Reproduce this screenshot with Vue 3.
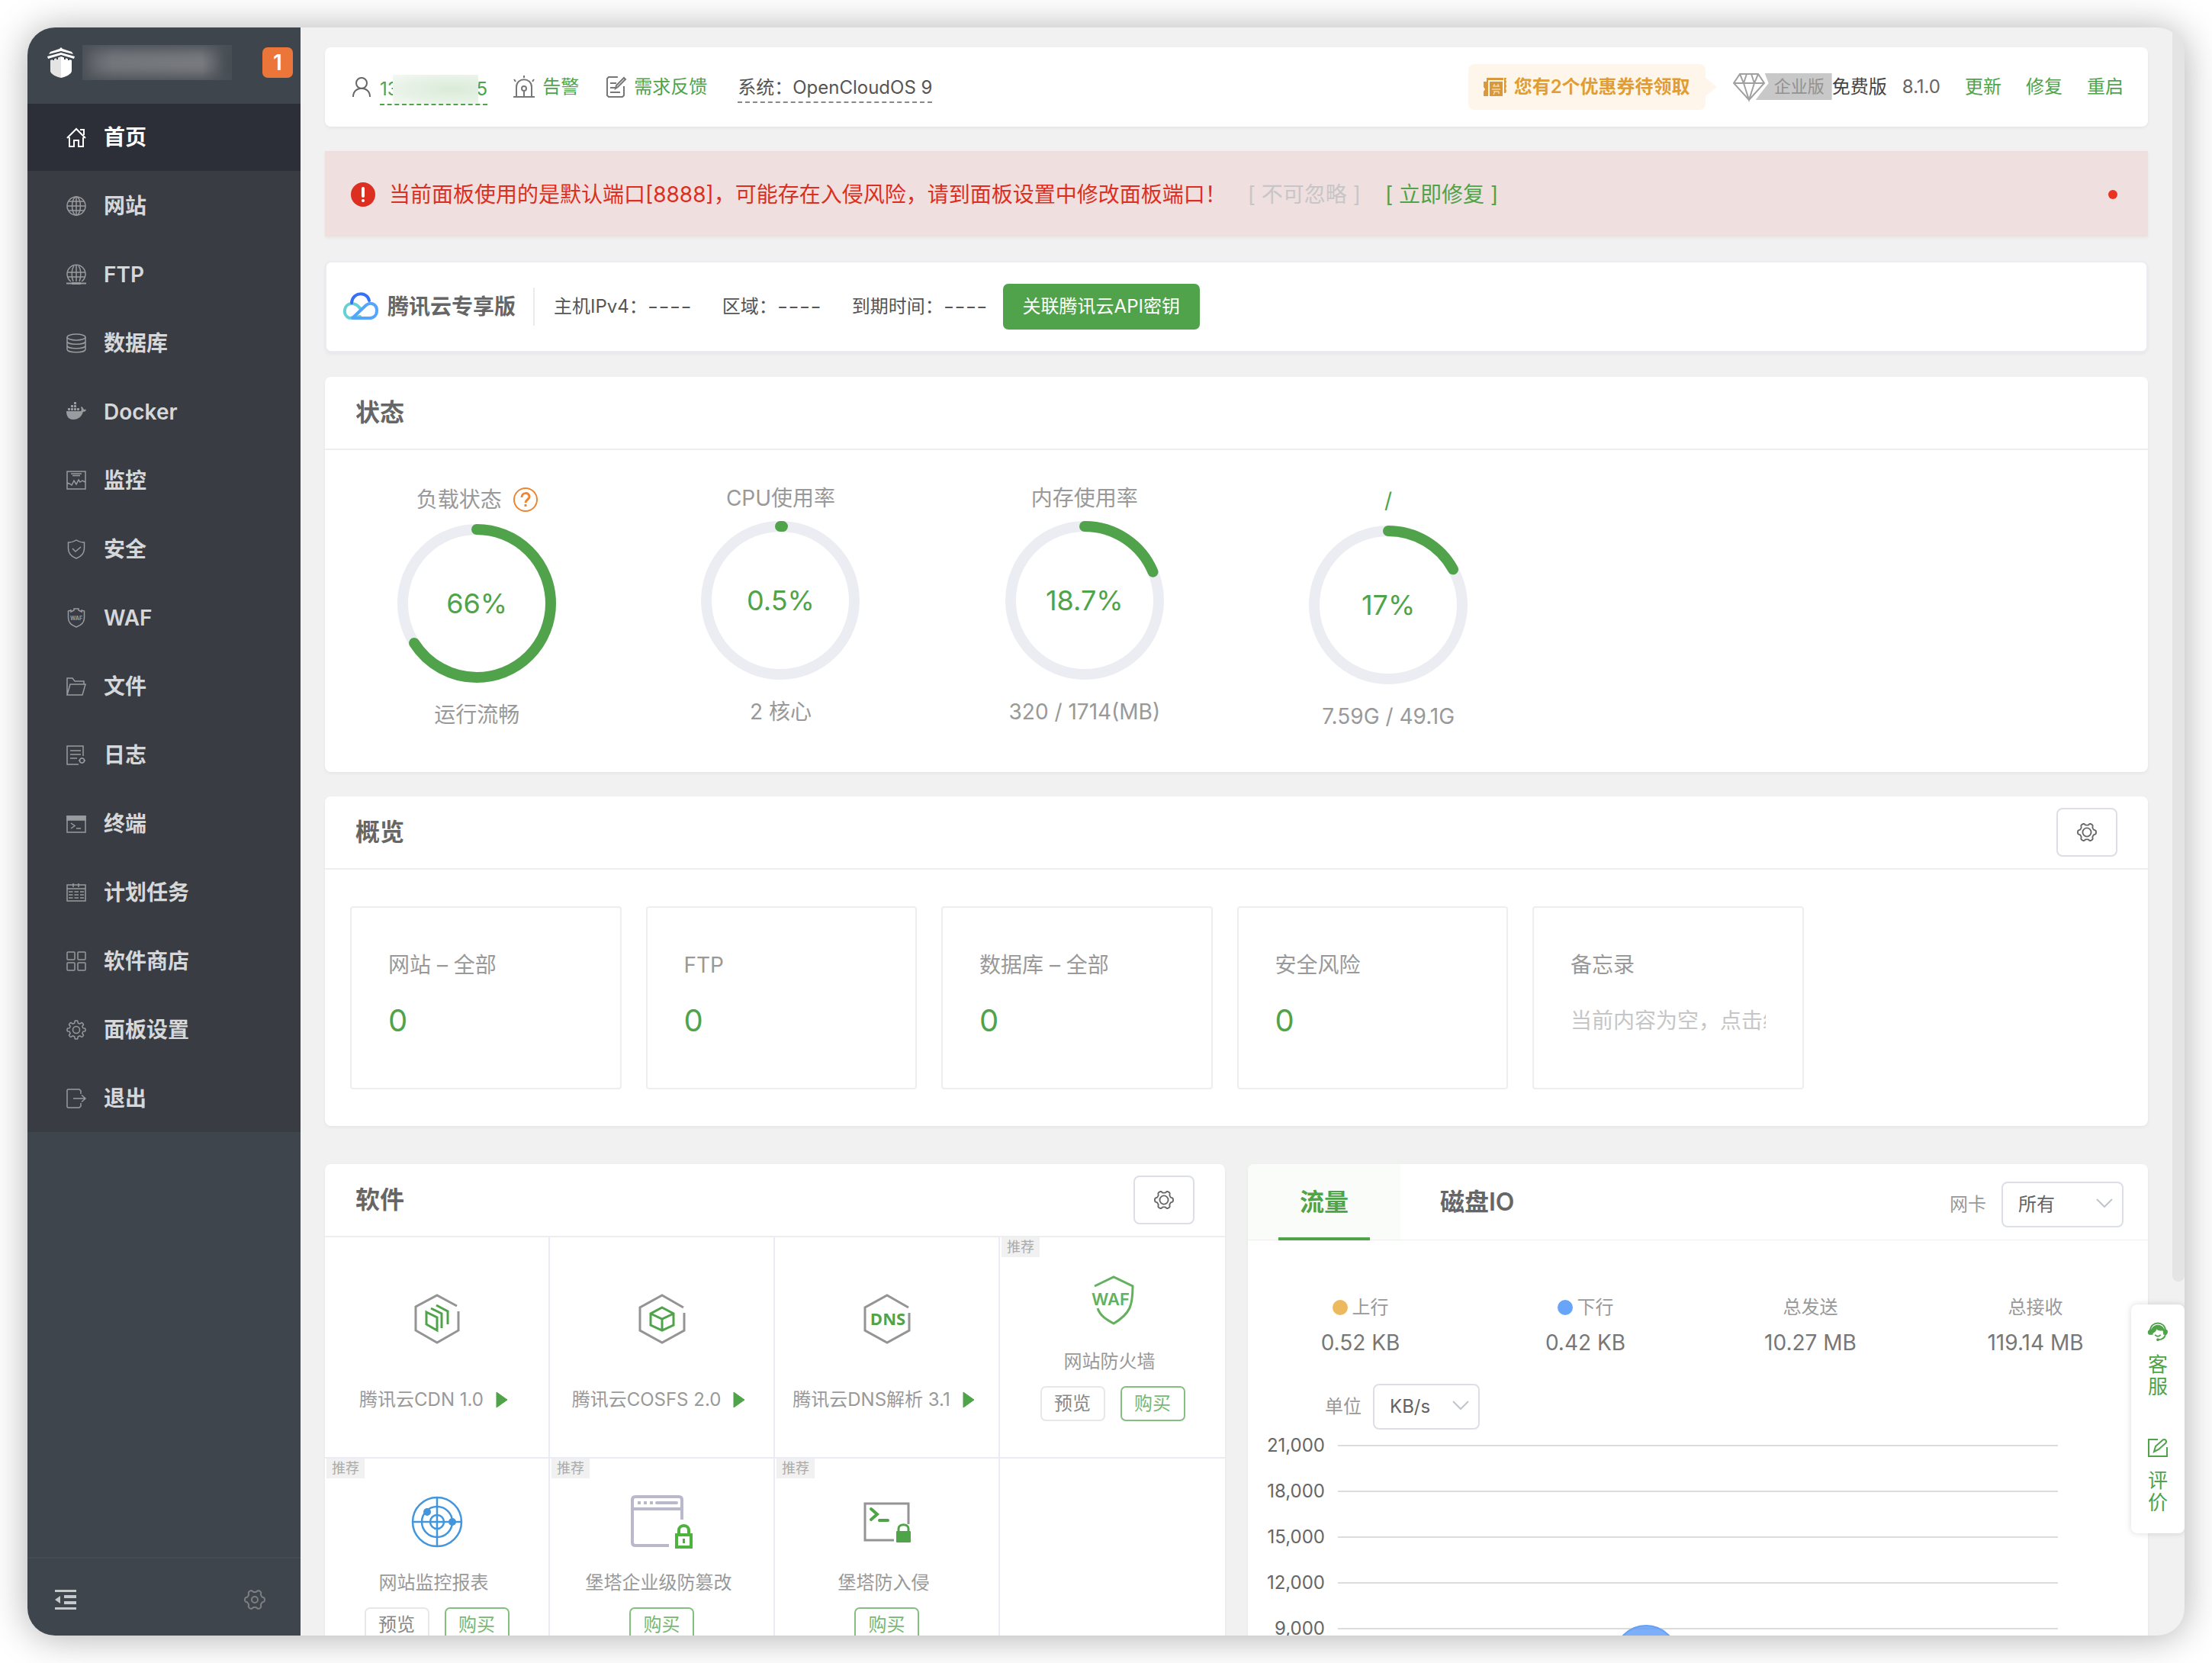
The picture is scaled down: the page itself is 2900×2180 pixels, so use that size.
<script setup>
import { ref } from 'vue'

// Outline of a toothed wheel, centred in a box of the given size
function gearPath(size, teeth, outer, depth, sharp) {
  const points = []
  for (let i = 0; i < 144; i++) {
    const a = (i / 144) * Math.PI * 2
    const r = outer - depth / 2 + (depth / 2) * Math.tanh(sharp * Math.cos(teeth * a))
    points.push(`${(size / 2 + r * Math.cos(a)).toFixed(2)} ${(size / 2 + r * Math.sin(a)).toFixed(2)}`)
  }
  return `M${points.join('L')}Z`
}

const gear6 = gearPath(28, 6, 13, 3, 2)
const gear8 = gearPath(26, 8, 12, 3, 3)

const menuIcons = {
  home: '<path d="M1 14 13 2l12 12M18 3h5v7M4 13v12h6v-8h6v8h6V13"/>',
  globe: '<circle cx="13" cy="13" r="12"/><ellipse cx="13" cy="13" rx="5.500" ry="12"/><path d="M13 1v24M1 13h24M3 7h20M3 19h20"/>',
  ftp: '<path d="M6 22A12 12 0 1 1 20 22M9 22C6 15 7 5 10 2M17 22c3-7 2-17-1-20M13 1v21M1 10h24M2 16h22"/><path d="M0 24.500h26" stroke-width="2"/><path d="M7 24.500h12" stroke-width="3"/>',
  database: '<ellipse cx="13" cy="5" rx="12" ry="4"/><path d="M1 5v16c0 5 24 5 24 0V5M1 10.500c0 5 24 5 24 0M1 16c0 5 24 5 24 0"/>',
  docker: '<g fill="currentColor" stroke="none"><path d="M0 12h19c1-1 1-3 0-5l1-1c2 1 2 3 3 4 1-.4 2-.4 3 .2-.8 1.800-2 2.600-4 2.600C20 19 16 23 9 23c-6 0-9-4-9-11z"/><path d="M2 8h3v3H2zM6 8h3v3H6zM10 8h3v3h-3zM14 8h3v3h-3zM6 4h3v3H6zM10 4h3v3h-3zM10 0h3v3h-3z"/></g>',
  monitor: '<path d="M1 1h24v23H1zM6 4h14M8 6.500h10M1 16l3 1 3 2 3-6 3 5 3-6 2 3 3-2 4 2"/>',
  shield: '<path d="M13 1c3 2 7 3 10.500 3v8c0 7-5 11-10.500 13C7.500 23 2.500 19 2.500 12V4C6 4 10 3 13 1z"/><path d="m8 12 4 4 7-6"/>',
  waf: '<path d="M2.500 4 6 3v2l4-2V1h6v2l4 2V3l3.500 1v9c0 6-5 10-10.500 12C7.500 23 2.500 19 2.500 13z"/><text x="13" y="15.500" text-anchor="middle" font-size="7" font-weight="700" font-family="Inter, sans-serif" fill="currentColor" stroke="none">WAF</text>',
  folder: '<path d="M1 24V2h7l3 4h12v4M1 24l4-14h20l-4 14z"/>',
  log: '<path d="M16 25H1V1h21v13M5 7h14M5 12h14M5 17h9"/><circle cx="20.500" cy="20" r="3"/><path d="M16 20h1M24 20h1M20.500 16v1M20.500 23v1"/>',
  terminal: '<path d="M1 3h24v21H1z"/><path d="M1 3h24v5H1z" fill="currentColor"/><path d="m6 12 5 3.500-5 3.500M13 19h6"/>',
  calendar: '<path d="M1 3h24v21H1zM1 8h24M9 1v5M16 1v5"/><path d="M3 12h20M3 16h20M3 20h20" stroke-dasharray="5.500 2"/>',
  grid: '<rect x="1" y="1" width="10" height="10" rx="1"/><rect x="15" y="1" width="10" height="10" rx="1"/><rect x="1" y="15" width="10" height="10" rx="1"/><rect x="15" y="15" width="10" height="10" rx="1"/>',
  gear: `<path d="${gear8}"/><circle cx="13" cy="13" r="4.500"/>`,
  exit: '<path d="M19 7V3l-2-2H2L1 2v22l1 1h15l2-2v-4M9 13h16M20 8.500l5 4.500-5 4.500"/>'
}

const menu = [
  { icon: 'home', label: '首页' },
  { icon: 'globe', label: '网站' },
  { icon: 'ftp', label: 'FTP' },
  { icon: 'database', label: '数据库' },
  { icon: 'docker', label: 'Docker' },
  { icon: 'monitor', label: '监控' },
  { icon: 'shield', label: '安全' },
  { icon: 'waf', label: 'WAF' },
  { icon: 'folder', label: '文件' },
  { icon: 'log', label: '日志' },
  { icon: 'terminal', label: '终端' },
  { icon: 'calendar', label: '计划任务' },
  { icon: 'grid', label: '软件商店' },
  { icon: 'gear', label: '面板设置' },
  { icon: 'exit', label: '退出' }
]

const cloudFields = ['主机IPv4：', '区域：', '到期时间：']

const gauges = [
  { kind: 'load', label: '负载状态', value: 66, note: '运行流畅', help: true },
  { kind: 'cpu', label: 'CPU使用率', value: 0.5, note: '2 核心' },
  { kind: 'memory', label: '内存使用率', value: 18.7, note: '320 / 1714(MB)' },
  { kind: 'disk', label: '/', value: 17, note: '7.59G / 49.1G' }
]

const counters = [
  { label: '网站 – 全部', value: 0 },
  { label: 'FTP', value: 0 },
  { label: '数据库 – 全部', value: 0 },
  { label: '安全风险', value: 0 }
]

const hexagon = '<path d="M64 21 36 5 7 21v30l29 16 29-16V28" stroke="#949494" stroke-width="3"/>'
const softIcons = {
  cdn: '<path d="M62 19 36 5 8 20v31l28 16 28-16V26" stroke="#949494" stroke-width="3"/><path d="m22 27 14 7v17l-14-8zM28 22l14 7v19M35 18l15 8v17" stroke="#4fa349" stroke-width="3"/>',
  cos: hexagon + '<path d="m36 21 15 8v15l-15 7-15-7V29zM21 29l15 7 15-7M36 36v15" stroke="#4fa349" stroke-width="3"/>',
  dns: hexagon + '<text x="37" y="44" text-anchor="middle" font-family="Open Sans, sans-serif" font-size="22" font-weight="700" fill="#4fa349">DNS</text>',
  waf: '<path d="M12 17 37 5l25 12c0 25-3 36-25 49-11-6-18-11-21-20" stroke="#63b05e" stroke-width="3"/><text x="33" y="42" text-anchor="middle" font-family="Inter, sans-serif" font-size="22" font-weight="600" fill="#63b05e">WAF</text>',
  radar: '<g stroke="#4396db" stroke-width="2.500"><circle cx="36" cy="36" r="32"/><circle cx="36" cy="36" r="20"/><circle cx="36" cy="36" r="9"/><path d="M36 4v64M4 36h64"/></g><circle cx="23" cy="23" r="5" fill="#4396db"/><circle cx="56" cy="36" r="5" fill="#4396db"/>',
  tamper: '<path d="M45 67H1q-4 0-4-4V7q0-4 4-4h57q4 0 4 4v26M-3 19h65" stroke="#bab8cb" stroke-width="4"/><path d="M4 11h22" stroke="#bab8cb" stroke-width="4" stroke-dasharray="4 4"/><path d="M29 11h26" stroke="#bab8cb" stroke-width="4" stroke-linecap="round"/><rect x="55" y="53" width="19" height="16" stroke="#4db33d" stroke-width="4"/><path d="M58 53v-6c0-8 13-8 13 0v6" stroke="#4db33d" stroke-width="4"/><path d="M64.500 58v6" stroke="#4db33d" stroke-width="3"/>',
  intrusion: '<path d="M45 60H7V12h57v27" stroke="#949494" stroke-width="3"/><path d="m15 19 8 7-8 7M26 34h11" stroke="#4fa349" stroke-width="4" stroke-linecap="round"/><rect x="48" y="48" width="19" height="15" rx="1" fill="#4fa349"/><path d="M51 50v-5c0-7 13-7 13 0v5" stroke="#4fa349" stroke-width="3"/>'
}

const software = [
  { icon: 'cdn', name: '腾讯云CDN 1.0', running: true },
  { icon: 'cos', name: '腾讯云COSFS 2.0', running: true },
  { icon: 'dns', name: '腾讯云DNS解析 3.1', running: true },
  { icon: 'waf', name: '网站防火墙', preview: true },
  { icon: 'radar', name: '网站监控报表', preview: true },
  { icon: 'tamper', name: '堡塔企业级防篡改' },
  { icon: 'intrusion', name: '堡塔防入侵' }
]

const traffic = [
  { label: '上行', value: '0.52 KB', dot: 'up' },
  { label: '下行', value: '0.42 KB', dot: 'down' },
  { label: '总发送', value: '10.27 MB' },
  { label: '总接收', value: '119.14 MB' }
]

const ticks = ['21,000', '18,000', '15,000', '12,000', '9,000']
const card = ref('所有')
const unit = ref('KB/s')
const memo = ref('')
</script>

<template>
  <div class="page">
    <div class="window">
      <aside class="sidebar">
        <div class="brand">
          <svg class="brand-logo" viewBox="0 0 36 40" width="36" height="40">
            <path d="M18 0 20 2 32 6 34 9 18 5 2 9 4 6 16 2z" fill="#fff" />
            <path d="M18 7 36 12 35 15 18 10 1 15 0 12z" fill="#fff" />
            <path d="M18 12 4 17v14c0 4 8 8 14 9z" fill="#e4e4e4" />
            <path d="M18 12 32 17v14c0 4-8 8-14 9z" fill="#fff" />
            <path d="M8 14v3M13 12v4M23 12v4M28 14v3" stroke="#3e454c" stroke-width="2" />
          </svg>
          <span class="brand-name"></span>
          <span class="brand-badge">1</span>
        </div>
        <nav>
          <ul class="menu">
            <li v-for="(item, i) in menu" :key="item.label">
              <a href="#" class="menu-link" :class="{ active: i === 0 }">
                <svg class="menu-icon" viewBox="0 0 26 26" width="26" height="26" v-html="menuIcons[item.icon]"></svg>
                {{ item.label }}
              </a>
            </li>
          </ul>
        </nav>
        <div class="sidebar-foot">
          <button class="plain" aria-label="收起菜单">
            <svg viewBox="0 0 28 26" width="28" height="26" fill="#c6c9cb">
              <path d="M0 0h28v3H0zM12 7h16v4H12zM12 15h16v4H12zM0 23h28v3H0zM7 8v10l-7-5z" />
            </svg>
          </button>
          <button class="plain" aria-label="菜单设置">
            <svg viewBox="0 0 28 28" width="30" height="28" fill="none" stroke="#7d7f81" stroke-width="2">
              <path :d="gear6" /><circle cx="14" cy="14" r="4" />
            </svg>
          </button>
        </div>
      </aside>

      <main class="main">
        <header class="card topbar">
          <a href="#" class="account">
            <svg viewBox="0 0 24 26" width="24" height="26" fill="none" stroke="#666" stroke-width="2">
              <circle cx="12" cy="8" r="7" /><path d="M1 26c0-15 22-15 22 0" />
            </svg>
            <span class="phone">13<i class="mask"></i>5</span>
          </a>
          <a href="#" class="top-link alarm">
            <svg viewBox="0 0 28 30" width="28" height="30" fill="none" stroke="#777" stroke-width="2">
              <path d="M0 28h28M4 28V15c0-13 20-13 20 0v13M14 0v3M1 5l2 3M27 5l-2 3M14 21v7" /><circle cx="14" cy="17" r="3" />
            </svg>
            告警
          </a>
          <a href="#" class="top-link feedback">
            <svg viewBox="0 0 26 28" width="26" height="28" fill="none" stroke="#777" stroke-width="2">
              <path d="M15 1H3L1 3v22l2 2h18l2-2V13M5 9h8M5 15h7M5 21h13M12 16l1-4L23 2l2 2-10 10z" />
            </svg>
            需求反馈
          </a>
          <span class="system">系统：OpenCloudOS 9</span>
          <div class="top-right">
            <a href="#" class="coupon">
              <svg viewBox="0 0 30 24" width="30" height="24">
                <path d="M4 0h22v3H6v2H4zM0 5h6v19H0v-6l2-3-2-3zM27 0h3l-1 3 1 2-1 3 1 3-1 3 1 3-1 3h-2z" fill="#d9983a" />
                <path d="M8 5h17v19H8z" fill="#d9983a" />
                <path d="M12 11h9M11 15h11M14 8v3M19 8v3M13 18h7v3M15 18l-2 4" fill="none" stroke="#fff3d9" stroke-width="1" />
              </svg>
              您有2个优惠券待领取
            </a>
            <a href="#" class="edition">
              <svg class="diamond" viewBox="0 0 42 36" width="42" height="36" fill="none" stroke="#a0a0a0" stroke-width="2">
                <path d="M9 1h24l8 12-20 22L1 13zM1 13h40M9 1l5 12 7 22 7-22 5-12M14 13l4-12M28 13 24 1" />
              </svg>
              <span class="edition-name">企业版</span>
            </a>
            <span class="free">免费版</span>
            <span class="version">8.1.0</span>
            <a href="#">更新</a>
            <a href="#">修复</a>
            <a href="#">重启</a>
          </div>
        </header>

        <section class="alert" role="alert">
          <svg viewBox="0 0 32 32" width="32" height="32">
            <circle cx="16" cy="16" r="16" fill="#dc2f21" />
            <path d="M16 8v10" stroke="#fff" stroke-width="4" stroke-linecap="round" /><circle cx="16" cy="24" r="2" fill="#fff" />
          </svg>
          <span class="alert-text">当前面板使用的是默认端口[8888]，可能存在入侵风险，请到面板设置中修改面板端口！</span>
          <span class="alert-fixed">[ 不可忽略 ]</span>
          <a href="#">[ 立即修复 ]</a>
          <i class="alert-dot"></i>
        </section>

        <section class="card cloud">
          <svg viewBox="0 0 46 36" width="46" height="36" fill="none" stroke-width="4" stroke-linecap="round">
            <path d="M22 31 8 33C-2 29 1 14 11 14c6 0 8 3 12 7" stroke="#66d1d3" />
            <path d="M11 13C12-2 32-2 34 10" stroke="#3670f6" />
            <path d="M12 33 30 16c6-5 14-1 14 7 0 6-4 10-10 10z" stroke="#55a5fb" stroke-linejoin="round" />
          </svg>
          <strong>腾讯云专享版</strong>
          <span v-for="f in cloudFields" :key="f" class="cloud-item">{{ f }}<span class="blank">----</span></span>
          <button class="primary">关联腾讯云API密钥</button>
        </section>

        <section class="card">
          <div class="card-head"><h2>状态</h2></div>
          <div class="gauges">
            <div v-for="g in gauges" :key="g.kind" class="gauge">
              <div class="gauge-label" :class="g.kind">
                {{ g.label }}
                <svg v-if="g.help" viewBox="0 0 32 32" width="32" height="32" fill="none" stroke="#ee8532" stroke-width="2">
                  <circle cx="16" cy="16" r="15" />
                  <path d="M11 13c0-7 10-7 10-1 0 4-5 4-5 8" stroke-width="3" /><path d="M16 22v3" stroke-width="3" />
                </svg>
              </div>
              <div class="ring">
                <svg viewBox="0 0 208 208" width="208" height="208" fill="none" stroke-width="14">
                  <circle cx="104" cy="104" r="97" stroke="#ecedf3" />
                  <circle cx="104" cy="104" r="97" stroke="#50a34a" stroke-linecap="round" pathLength="100"
                    :stroke-dasharray="`${g.value} 100`" transform="rotate(-90 104 104)" />
                </svg>
                <span class="ring-value">{{ g.value }}%</span>
              </div>
              <div class="gauge-note">{{ g.note }}</div>
            </div>
          </div>
        </section>

        <section class="card">
          <div class="card-head">
            <h2>概览</h2>
            <button class="gear-button" aria-label="概览设置">
              <svg viewBox="0 0 28 28" width="26" height="26" fill="none" stroke="#666" stroke-width="2">
                <path :d="gear6" /><circle cx="14" cy="14" r="6" />
              </svg>
            </button>
          </div>
          <div class="counters">
            <div v-for="c in counters" :key="c.label" class="counter">
              <div class="counter-label">{{ c.label }}</div>
              <a href="#" class="counter-value">{{ c.value }}</a>
            </div>
            <div class="counter">
              <label class="counter-label" for="memo">备忘录</label>
              <input id="memo" v-model="memo" class="memo" placeholder="当前内容为空，点击编辑" />
            </div>
          </div>
        </section>

        <div class="bottom">
          <section class="card">
            <div class="card-head">
              <h2>软件</h2>
              <button class="gear-button" aria-label="软件设置">
                <svg viewBox="0 0 28 28" width="26" height="26" fill="none" stroke="#666" stroke-width="2">
                  <path :d="gear6" /><circle cx="14" cy="14" r="6" />
                </svg>
              </button>
            </div>
            <div class="apps">
              <div v-for="s in software" :key="s.icon" class="app" :class="{ promo: !s.running }">
                <span v-if="!s.running" class="tag">推荐</span>
                <svg class="app-icon" viewBox="0 0 72 72" width="72" height="72" v-html="softIcons[s.icon]"></svg>
                <div class="app-name">
                  {{ s.name }}
                  <svg v-if="s.running" viewBox="0 0 16 22" width="16" height="22"><path d="M1 1v20l14-10z" fill="#4fa349" stroke="#4fa349" stroke-linejoin="round" /></svg>
                </div>
                <div v-if="!s.running" class="app-actions">
                  <button v-if="s.preview" class="small">预览</button>
                  <button class="small buy">购买</button>
                </div>
              </div>
              <div class="app"></div>
            </div>
          </section>

          <section class="card">
            <div class="tabs">
              <button class="tab active"><span>流量</span></button>
              <button class="tab"><span>磁盘IO</span></button>
              <div class="card-pick">
                <label for="card">网卡</label>
                <div class="pick wide">
                  <select id="card" v-model="card"><option>所有</option></select>
                  <svg viewBox="0 0 22 12" width="22" height="12" fill="none" stroke="#c0c4cc" stroke-width="2"><path d="m1 1 10 10L21 1" /></svg>
                </div>
              </div>
            </div>
            <div class="traffic">
              <div v-for="t in traffic" :key="t.label" class="traffic-item">
                <div class="traffic-label"><i v-if="t.dot" class="dot" :class="t.dot"></i>{{ t.label }}</div>
                <div class="traffic-value">{{ t.value }}</div>
              </div>
            </div>
            <div class="unit">
              <label for="unit">单位</label>
              <div class="pick">
                <select id="unit" v-model="unit"><option>KB/s</option></select>
                <svg viewBox="0 0 22 12" width="22" height="12" fill="none" stroke="#c0c4cc" stroke-width="2"><path d="m1 1 10 10L21 1" /></svg>
              </div>
            </div>
            <div class="chart">
              <div v-for="t in ticks" :key="t" class="tick"><span>{{ t }}</span><i></i></div>
              <svg class="peak" viewBox="0 0 84 84" width="84" height="84"><circle cx="42" cy="42" r="41" fill="#5c9af7" fill-opacity=".8" stroke="#64a0f5" stroke-width="2" /></svg>
            </div>
          </section>
        </div>

        <i class="scroll-thumb"></i>
        <div class="helper">
          <a href="#">
            <svg viewBox="0 0 28 26" width="28" height="24">
              <path d="M3 11C4-3 24-3 25 11" fill="none" stroke="#4fa349" stroke-width="2" />
              <path d="M5 9c3-8 15-8 18 0l4 1c2 2 1 6-1 7h-4l-1-6c-5 1-7 0-9-2 0 3-3 5-5 6v2H2c-3-1-3-6 0-7z" fill="#4fa349" />
              <path d="M10 17c2 3 6 3 8 0M25 16c-1 5-5 8-10 8" fill="none" stroke="#4fa349" stroke-width="2" />
              <circle cx="14" cy="24" r="2" fill="#4fa349" />
            </svg>
            <span>客服</span>
          </a>
          <a href="#">
            <svg viewBox="0 0 26 24" width="26" height="24" fill="none" stroke="#4fa349" stroke-width="2">
              <path d="M13 1H1v22h24V11M8 17l2-7 9-8c3-3 7 1 4 4l-9 8z" />
            </svg>
            <span>评价</span>
          </a>
        </div>
      </main>
    </div>
  </div>
</template>

<style>
body { background: #fff; }
</style>

<style scoped>
* { box-sizing: border-box; }
.page {
  height: 100vh;
  padding: 36px;
  font-family: Inter, "Noto Sans CJK SC", sans-serif;
  font-size: 24px;
  line-height: 36px;
  color: #666;
}
a { color: #4fa349; text-decoration: none; }
button, select, input { font: inherit; color: inherit; }
button { cursor: pointer; padding: 0; }
h2, ul { margin: 0; padding: 0; }
svg { flex: none; display: block; overflow: visible; }
.plain { border: 0; background: none; }
.window {
  display: flex;
  height: 100%;
  border-radius: 36px;
  overflow: hidden;
  background: #f1f1f1;
  box-shadow: 0 2px 50px rgba(0, 0, 0, 0.32);
}

.sidebar { flex: none; width: 358px; display: flex; flex-direction: column; background: #3e454c; }
.brand { height: 100px; padding: 0 10px 8px 26px; display: flex; align-items: center; }
.brand-name {
  flex: 1;
  height: 46px;
  margin: 0 40px 0 10px;
  background: linear-gradient(90deg, #5b5f65, #74777c 20%, #797b80 80%, #3e454c);
  box-shadow: inset 0 0 16px 6px #4a5057;
}
.brand-badge {
  width: 40px; height: 40px; line-height: 40px; border-radius: 7px;
  background: #ec763a; color: #fff; font-size: 28px; font-weight: 600; text-align: center;
}
.menu { list-style: none; background: #393c43; }
.menu li + li { padding-top: 2px; }
.menu-link {
  display: flex; align-items: center; gap: 23px; height: 88px; padding-left: 51px;
  font-size: 28px; font-weight: 600; color: #d6d7d8;
}
.menu-link.active { background: #2c2f37; color: #fff; }
.menu-icon { color: #999b9e; fill: none; stroke: currentColor; stroke-width: 1.5; }
.active .menu-icon { color: #fff; stroke-width: 2; }
.sidebar-foot {
  margin-top: auto; height: 103px; padding: 6px 45px 0 36px; display: flex; align-items: center;
  justify-content: space-between; border-top: 2px solid #454b55;
}

.main { position: relative; flex: 1; min-width: 0; padding: 26px 48px 0 32px; }
.card { border-radius: 8px; background: #fff; box-shadow: 0 2px 4px rgba(0, 0, 0, 0.05); margin-bottom: 32px; }
.topbar { display: flex; align-items: center; height: 104px; padding: 0 32px 0 36px; }
.account { display: flex; align-items: center; gap: 12px; }
.phone { display: flex; margin-top: 8px; border-bottom: 2px dashed #4fa349; line-height: 38px; }
.mask {
  position: relative; width: 112px; margin: 0 -2px 0 -8px;
  background: radial-gradient(ellipse at 70% 50%, #dcecdb 10%, #e8f2e7 60%, #f4f9f3 100%);
}
.top-link { display: flex; align-items: center; gap: 10px; }
.alarm { margin-left: 34px; }
.feedback { margin-left: 36px; }
.system { margin: 3px 0 0 40px; border-bottom: 2px dashed #888; color: #555; }
.top-right { margin-left: auto; display: flex; align-items: center; gap: 32px; }
.coupon {
  position: relative; display: flex; align-items: center; gap: 10px; height: 60px; padding: 0 20px;
  border-radius: 8px; background: #fef6ea; color: #e19d33; font-weight: 600; margin-right: 4px;
}
.coupon::after {
  content: ""; position: absolute; left: 100%; top: 18px;
  border: solid transparent; border-width: 12px 0 12px 15px; border-left-color: #fef6ea;
}
.edition { display: flex; margin-right: -32px; }
.edition-name {
  height: 35px; line-height: 34px; margin-left: -12px; padding: 0 10px 0 24px; font-size: 22px;
  color: #929292; background: #c8c8c8; clip-path: polygon(12px 0, 100% 0, 100% 100%, 0 100%, 17px 13px);
}
.free { color: #444; margin-right: -12px; }

.alert {
  display: flex; align-items: center; height: 112px; margin-bottom: 32px; padding: 2px 40px 0 34px;
  background: #efdfdf; box-shadow: 0 2px 4px rgba(0, 0, 0, 0.05); font-size: 28px; color: #dc2f21;
}
.alert-text { margin: 0 28px 0 18px; }
.alert-fixed { color: #c6c6c8; margin-right: 32px; }
.alert-dot { margin-left: auto; width: 12px; height: 12px; border-radius: 50%; background: #ea3323; }

.cloud { display: flex; align-items: center; height: 120px; padding: 0 22px; border: 2px solid #ebecf2; color: #555; }
.cloud strong { margin: 0 23px 0 12px; font-size: 28px; font-weight: 700; color: #666; }
.cloud-item { display: flex; align-items: center; height: 50px; margin-right: 40px; }
.cloud strong + .cloud-item { padding-left: 25px; border-left: 2px solid #ebebeb; }
.blank { font-size: 32px; font-weight: 300; }
.primary {
  height: 60px; margin-left: -20px; padding: 0 26px; border: 0; border-radius: 7px;
  background: #50a34a; color: #fff;
}

.card-head {
  display: flex; align-items: center; justify-content: space-between; height: 96px;
  padding: 0 40px; border-bottom: 2px solid #eee;
}
h2 { font-size: 32px; font-weight: 600; color: #666; }
.gear-button {
  display: flex; align-items: center; justify-content: center; width: 80px; height: 64px;
  border: 2px solid #dcdfe6; border-radius: 8px; background: #fff;
}
.gauges { display: grid; grid-template-columns: repeat(6, 1fr); height: 422px; padding-top: 43px; }
.gauge { text-align: center; font-size: 28px; color: #999; }
.gauge-label { display: flex; align-items: center; justify-content: center; gap: 15px; height: 40px; margin-bottom: 10px; }
.gauge-label.load { height: 44px; }
.gauge-label.disk { height: 46px; color: #4fa349; }
.ring { position: relative; width: 208px; margin: 0 auto; }
.ring-value {
  position: absolute; inset: 0; display: flex; align-items: center; justify-content: center;
  font-size: 36px; color: #4fa349;
}
.gauge-note { margin-top: 24px; }

.counters { display: grid; grid-template-columns: repeat(6, 1fr); gap: 32px; padding: 48px 64px 48px 33px; }
.counter { height: 240px; padding: 55px 48px 0; border: 2px solid #eee; border-radius: 4px; }
.counter-label { display: block; font-size: 28px; line-height: 40px; color: #999; }
.counter-value { display: block; margin-top: 25px; font-size: 40px; line-height: 56px; }
.memo {
  display: block; width: 100%; height: 56px; margin-top: 25px; padding: 0; border: 0; outline: 0;
  background: none; font-size: 28px;
}
.memo::placeholder { color: #c6c6c6; opacity: 1; }

.bottom { display: grid; grid-template-columns: 1fr 1fr; gap: 30px; padding-top: 18px; }
.apps { display: grid; grid-template-columns: repeat(4, 1fr); }
.app {
  position: relative; display: flex; flex-direction: column; align-items: center; height: 290px;
  padding-top: 71px; border: solid #ebebf8; border-width: 0 2px 2px 0;
}
.app:nth-child(4n) { border-right: 0; }
.app.promo { padding-top: 47px; }
.app-icon { fill: none; }
.app-name { display: flex; align-items: center; gap: 16px; margin-top: 52px; padding-right: 8px; color: #999; white-space: nowrap; }
.promo .app-name { margin-top: 26px; }
.app-actions { display: flex; gap: 20px; margin-top: 14px; }
.small { width: 85px; height: 46px; border: 2px solid #e6e7eb; border-radius: 7px; background: #fff; color: #888; line-height: 40px; }
.small.buy { border-color: #84bf80; color: #77b873; }
.tag {
  position: absolute; top: 0; left: 2px; width: 50px; height: 26px; line-height: 25px;
  background: #f1f1f1; font-size: 18px; color: #aaa; text-align: center;
}

.tabs { display: flex; height: 100px; border-bottom: 1px solid #ebeef5; }
.tab { border: 0; background: none; padding: 0 52px; font-size: 32px; font-weight: 600; }
.tab.active { width: 200px; padding: 0 40px; background: #fafcf9; color: #4fa349; border-top-left-radius: 8px; }
.tab span { display: flex; align-items: center; justify-content: center; height: 100px; }
.tab.active span { border-bottom: 4px solid #4fa349; padding-top: 4px; }
.card-pick { display: flex; align-items: center; gap: 20px; margin-left: auto; padding: 6px 32px 0 0; color: #999; }
.pick { position: relative; width: 140px; }
.pick.wide { width: 160px; }
.pick select {
  display: block; width: 100%; height: 60px; padding: 0 20px; appearance: none;
  border: 2px solid #dcdfe6; border-radius: 8px; background: #fff; color: #606266;
}
.pick svg { position: absolute; right: 14px; top: 22px; pointer-events: none; }
.traffic { display: grid; grid-template-columns: repeat(4, 1fr); padding-top: 70px; text-align: center; color: #999; }
.traffic-label { display: flex; align-items: center; justify-content: center; gap: 6px; }
.dot { width: 20px; height: 20px; border-radius: 50%; }
.dot.up { background: #edb95f; }
.dot.down { background: #68a5f8; }
.traffic-value { margin-top: 8px; font-size: 28px; line-height: 40px; color: #777; }
.unit { display: flex; align-items: center; gap: 15px; padding: 34px 0 0 101px; color: #999; }
.chart { position: relative; padding: 1px 118px 0 0; }
.tick { display: flex; align-items: center; gap: 17px; height: 40px; margin-bottom: 20px; }
.tick span { width: 101px; text-align: right; }
.tick i { flex: 1; height: 2px; background: #dcdcdc; }
.peak { position: absolute; left: 480px; top: 256px; }

.scroll-thumb { position: absolute; top: 0; right: 0; width: 16px; height: 78%; border-radius: 0 0 8px 8px; background: #e4e4e4; }
.helper {
  position: absolute; right: 0; bottom: 134px; width: 70px; height: 300px; padding: 24px 0 0; border-radius: 8px;
  background: #fff; box-shadow: 0 0 8px rgba(0, 0, 0, 0.15);
}
.helper a { display: flex; flex-direction: column; align-items: center; height: 152px; line-height: 29px; font-size: 26px; }
.helper span { width: 26px; margin-top: 16px; }
</style>
